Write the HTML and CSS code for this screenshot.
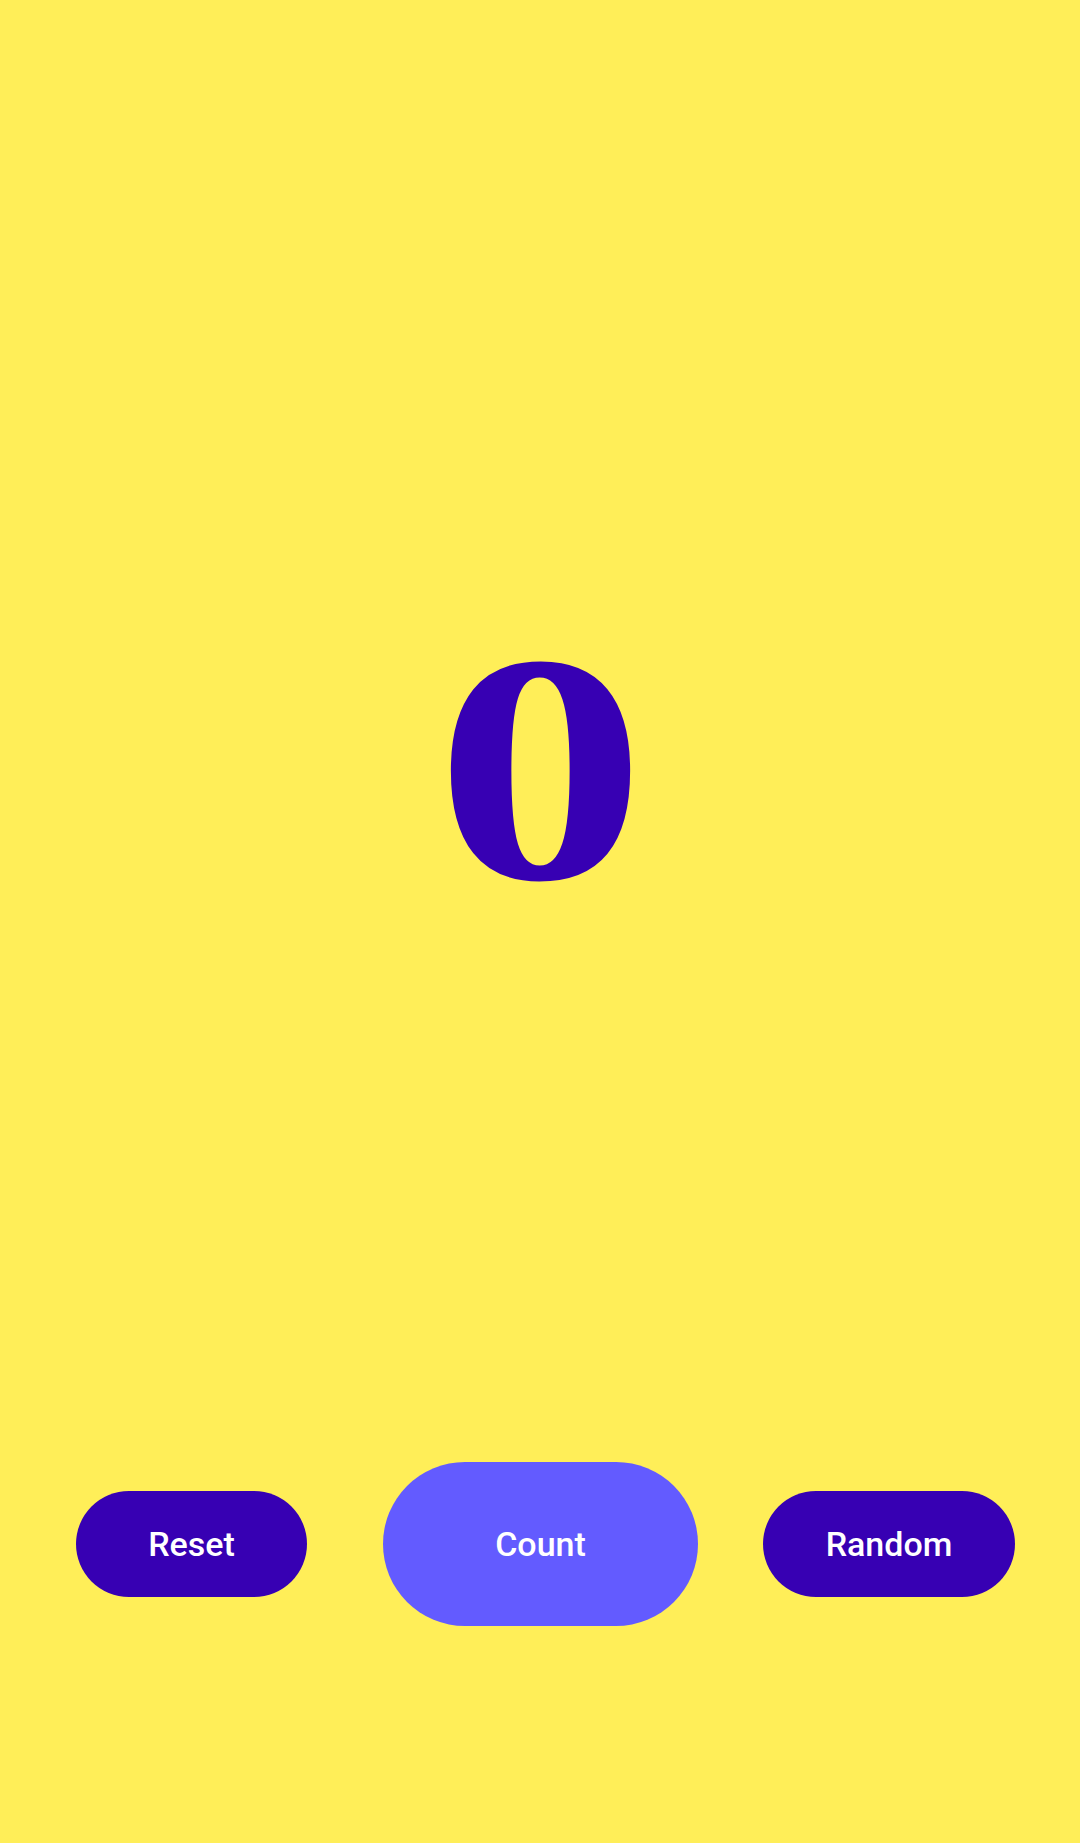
FILE: index.html
```html
<!DOCTYPE html>
<html>
<head>
<meta charset="utf-8">
<link rel="stylesheet" href="styles.css">
</head>
<body>
<div class="app">
  <div class="counter-area">
    <div class="counter">0</div>
  </div>
  <div class="controls">
    <button class="btn btn-small">Reset</button>
    <button class="btn btn-count">Count</button>
    <button class="btn btn-small btn-random">Random</button>
  </div>
</div>
</body>
</html>
```
FILE: styles.css
```css
html, body {
  margin: 0;
  padding: 0;
  background: #FFEE58;
}
.app {
  width: 1080px;
  height: 1843px;
  display: flex;
  flex-direction: column;
}
.counter-area {
  height: 1462px;
  display: flex;
  flex-direction: column;
  align-items: center;
}
.counter {
  margin-top: 596px;
  font-family: "Liberation Serif", serif;
  font-weight: bold;
  font-size: 318px;
  line-height: 340px;
  color: #3700B3;
  transform: scale(1.33, 1.025);
  transform-origin: center 68px;
}
.controls {
  display: flex;
  align-items: center;
  padding-left: 76px;
}
.btn {
  border: none;
  margin: 0;
  padding: 0;
  font-family: Roboto, "Noto Sans", sans-serif;
  font-weight: 500;
  font-size: 34px;
  color: #ffffff;
  display: flex;
  align-items: center;
  justify-content: center;
}
.btn-small {
  height: 106px;
  width: 231px;
  border-radius: 53px;
  background: #3700B3;
}
.btn-random {
  width: 252px;
}
.btn-count {
  height: 164px;
  width: 315px;
  border-radius: 82px;
  background: #635BFF;
  margin: 0 65px 0 76px;
}
```
